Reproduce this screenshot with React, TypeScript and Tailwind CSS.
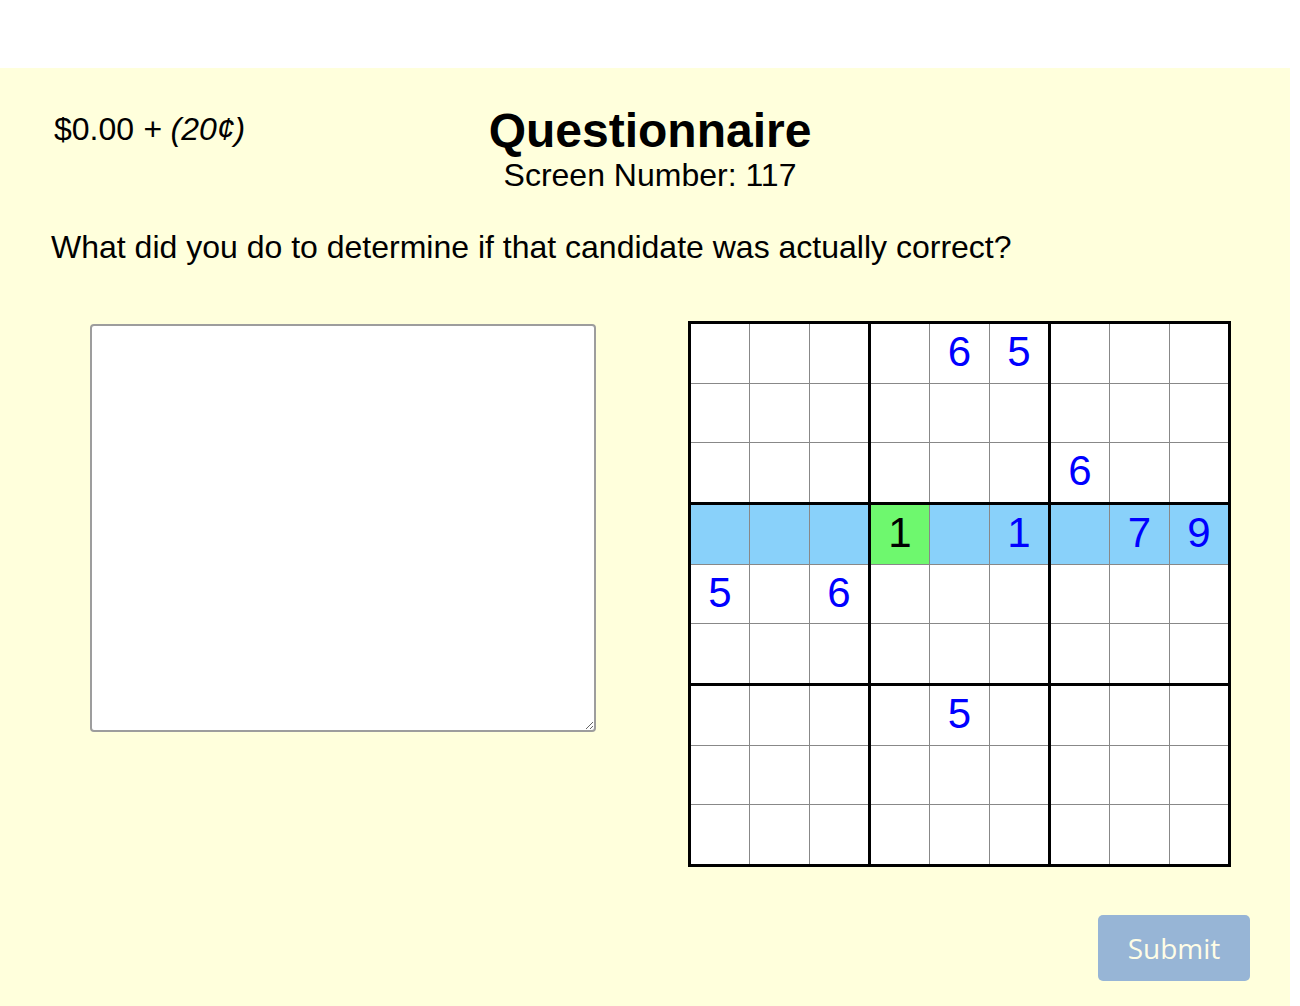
import React from "react";

const puzzle: (string | null)[][] = [
  [null, null, null, null, "6", "5", null, null, null],
  [null, null, null, null, null, null, null, null, null],
  [null, null, null, null, null, null, "6", null, null],
  [null, null, null, "1", null, "1", null, "7", "9"],
  ["5", null, "6", null, null, null, null, null, null],
  [null, null, null, null, null, null, null, null, null],
  [null, null, null, null, "5", null, null, null, null],
  [null, null, null, null, null, null, null, null, null],
  [null, null, null, null, null, null, null, null, null],
];

const HL_ROW = 3;
const FOCUS = { r: 3, c: 3 };

function SudokuCell({ r, c }: { r: number; c: number }) {
  const v = puzzle[r][c];
  const focus = r === FOCUS.r && c === FOCUS.c;
  const bg = focus ? "bg-[#6ef86e]" : r === HL_ROW ? "bg-[#89d1fa]" : "bg-white";
  return (
    <div className={`${bg} flex items-center justify-center`}>
      {v && (
        <span
          className={`-mt-[3px] text-[42px] leading-none ${focus ? "text-black" : "text-[#0000ff]"}`}
        >
          {v}
        </span>
      )}
    </div>
  );
}

function Box({ br, bc }: { br: number; bc: number }) {
  const cells = [];
  for (let i = 0; i < 3; i++) {
    for (let j = 0; j < 3; j++) {
      cells.push(<SudokuCell key={`${i}-${j}`} r={br * 3 + i} c={bc * 3 + j} />);
    }
  }
  return (
    <div className="grid grid-cols-[58px_59px_58px] grid-rows-[59px_58px_59px] gap-px bg-[#888888]">
      {cells}
    </div>
  );
}

export default function App() {
  const boxes = [];
  for (let br = 0; br < 3; br++) {
    for (let bc = 0; bc < 3; bc++) {
      boxes.push(<Box key={`${br}-${bc}`} br={br} bc={bc} />);
    }
  }

  return (
    <div
      className="min-h-screen bg-white pt-[68px]"
      style={{ fontFamily: '"Liberation Sans", Arial, sans-serif' }}
    >
      <div className="w-[1290px] min-h-[938px] bg-[#ffffdc] text-black">
        {/* header */}
        <div className="grid w-[1300px] grid-cols-[1fr_auto_1fr] pt-[39px]">
          <div className="pl-[54px] pt-[6px] text-[32px] leading-none">
            $0.00 <i>+ (20¢)</i>
          </div>
          <div className="flex flex-col items-center">
            <h1 className="text-[48px] font-bold leading-none">Questionnaire</h1>
            <div className="mt-[4px] text-[32px] leading-none">Screen Number: 117</div>
          </div>
          <div />
        </div>

        <p className="mt-[40px] pl-[51px] text-[32px] leading-none">
          What did you do to determine if that candidate was actually correct?
        </p>

        <div className="mt-[58px] flex items-start">
          <textarea className="ml-[90px] mt-[3px] h-[408px] w-[506px] resize rounded-[4px] border-2 border-[#9d9d9d] bg-white p-2 outline-none" />
          <div className="ml-[92px] grid grid-cols-3 gap-[3px] border-[3px] border-black bg-black">
            {boxes}
          </div>
        </div>

        <div className="flex justify-end pr-[40px] pt-[48px] pb-[26px]">
          <button
            className="h-[66px] w-[152px] rounded-[5px] bg-[#97b5d6] text-[28px] text-[#fffde6]"
            style={{ fontFamily: '"Open Sans", sans-serif' }}
          >
            Submit
          </button>
        </div>
      </div>
    </div>
  );
}
